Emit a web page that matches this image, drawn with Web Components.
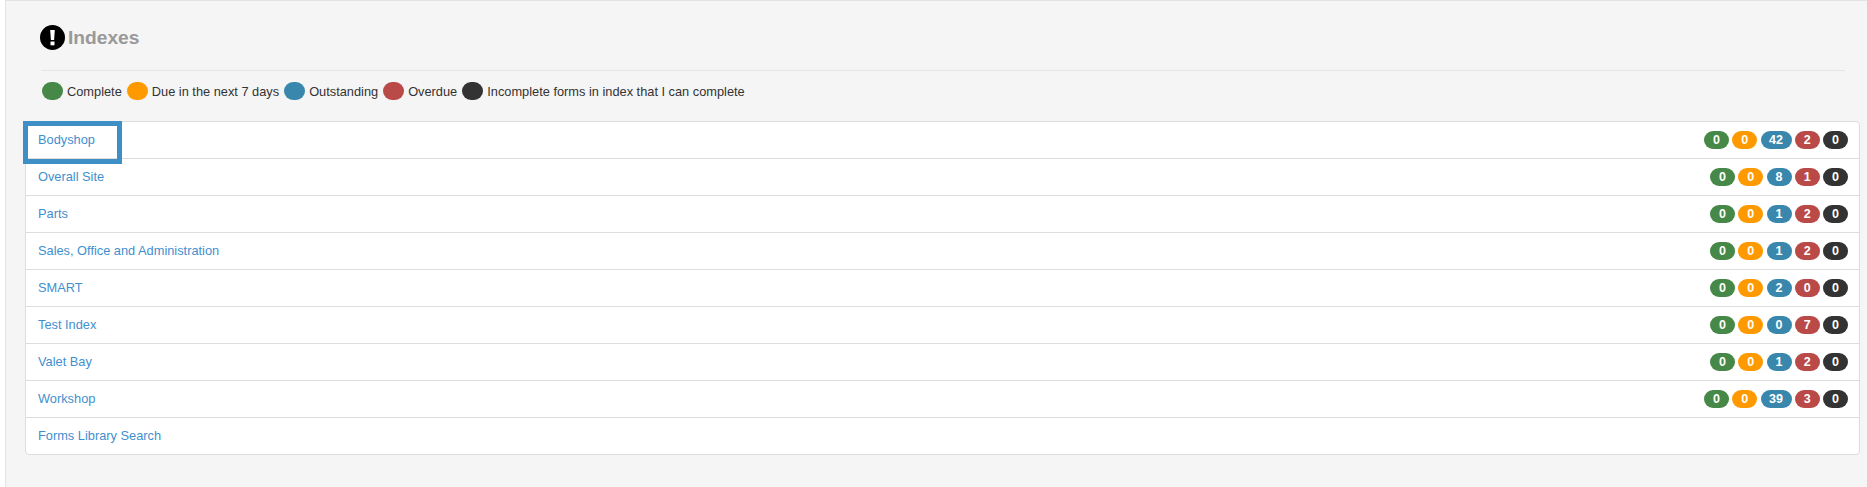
<!DOCTYPE html>
<html>
<head>
<meta charset="utf-8">
<title>Indexes</title>
<style>
  html, body { margin: 0; padding: 0; background: #fff; height: 100%; overflow: hidden; }
  body { font-family: "Liberation Sans", Arial, sans-serif; font-size: 12.8px; color: #333; }
</style>
</head>
<body>
<index-panel>
  <index-row name="Bodyshop" counts="0,0,42,2,0" focused></index-row>
  <index-row name="Overall Site" counts="0,0,8,1,0"></index-row>
  <index-row name="Parts" counts="0,0,1,2,0"></index-row>
  <index-row name="Sales, Office and Administration" counts="0,0,1,2,0"></index-row>
  <index-row name="SMART" counts="0,0,2,0,0"></index-row>
  <index-row name="Test Index" counts="0,0,0,7,0"></index-row>
  <index-row name="Valet Bay" counts="0,0,1,2,0"></index-row>
  <index-row name="Workshop" counts="0,0,39,3,0"></index-row>
  <index-row name="Forms Library Search"></index-row>
</index-panel>

<script>
(function Indexes() {
  const COLOURS = ["#468847", "#ff9900", "#3a87ad", "#b94a48", "#333333"];

  class CountBadge extends HTMLElement {
    constructor() {
      super();
      this.attachShadow({ mode: "open" });
      this.shadowRoot.innerHTML = `
        <style>
          :host {
            display: inline-block;
            box-sizing: border-box;
            height: 18px;
            min-width: 25px;
            padding: 0 8.5px;
            border-radius: 9px;
            background: var(--badge, #333);
            color: #fff;
            font-size: 12.5px;
            font-weight: bold;
            line-height: 18px;
            text-align: center;
          }
        </style>
        <slot></slot>
      `;
    }
  }

  class LegendItem extends HTMLElement {
    constructor() {
      super();
      this.attachShadow({ mode: "open" });
      this.shadowRoot.innerHTML = `
        <style>
          :host { display: inline-flex; align-items: center; gap: 4px; }
          i {
            display: block;
            width: 21px;
            height: 18px;
            border-radius: 9px;
            background: var(--badge, #333);
          }
        </style>
        <i></i><slot></slot>
      `;
    }
  }

  class IndexRow extends HTMLElement {
    constructor() {
      super();
      const name = this.getAttribute("name");
      const counts = this.getAttribute("counts");
      const badges = counts
        ? counts
            .split(",")
            .map((n, i) => `<count-badge style="--badge:${COLOURS[i]}">${n}</count-badge>`)
            .join("")
        : "";
      this.attachShadow({ mode: "open" });
      this.shadowRoot.innerHTML = `
        <style>
          :host {
            display: flex;
            position: relative;
            box-sizing: border-box;
            height: 37px;
            padding: 0 11px 1px 12px;
            align-items: center;
            justify-content: space-between;
            border-bottom: 1px solid #ddd;
          }
          :host([focused]) { z-index: 1; }
          :host(:last-child) { border-bottom: 0; height: 36px; }
          a { color: #3f8fcf; text-decoration: none; font-size: 12.8px; }
          .badges { display: flex; gap: 3.25px; }
          .focus {
            position: absolute;
            left: -3px;
            top: -1px;
            width: 99px;
            height: 43px;
            box-sizing: border-box;
            border: 5px solid #3d8fc6;
          }
        </style>
        <a href="#">${name}</a>
        <div class="badges">${badges}</div>
        ${this.hasAttribute("focused") ? '<div class="focus"></div>' : ""}
      `;
    }
  }

  class IndexPanel extends HTMLElement {
    constructor() {
      super();
      this.attachShadow({ mode: "open" });
      this.shadowRoot.innerHTML = `
        <style>
          :host {
            display: block;
            box-sizing: border-box;
            height: 487px;
            margin-left: 5px;
            padding: 24px 7px 0 19px;
            background: #f5f5f5;
            border: 1px solid #e3e3e3;
            border-width: 1px 0 0 1px;
          }
          header {
            display: flex;
            align-items: center;
            height: 25px;
            margin-left: 15px;
            color: #999;
            font-size: 19.2px;
            font-weight: bold;
          }
          header svg { display: block; width: 25px; height: 25px; margin-right: 3px; }
          header span { padding-top: 1px; }
          hr {
            border: 0;
            border-top: 1px solid #e5e5e5;
            margin: 20px 15px 0 16px;
          }
          .legend {
            display: flex;
            gap: 5px;
            margin: 11px 0 0 17px;
            height: 18px;
            align-items: center;
          }
          .list {
            margin-top: 21px;
            border: 1px solid #ddd;
            border-radius: 4px;
            background: #fff;
          }
        </style>
        <header>
          <svg viewBox="0 0 25 25" aria-hidden="true">
            <circle cx="12.5" cy="12.5" r="12.5" fill="#000"/>
            <path d="M10.2 5h4.6l-.7 10h-3.2z" fill="#fff"/>
            <rect x="10.5" y="16.5" width="4" height="3.8" fill="#fff"/>
          </svg>
          <span>Indexes</span>
        </header>
        <hr>
        <div class="legend">
          <legend-item style="--badge:${COLOURS[0]}">Complete</legend-item>
          <legend-item style="--badge:${COLOURS[1]}">Due in the next 7 days</legend-item>
          <legend-item style="--badge:${COLOURS[2]}">Outstanding</legend-item>
          <legend-item style="--badge:${COLOURS[3]}">Overdue</legend-item>
          <legend-item style="--badge:${COLOURS[4]}">Incomplete forms in index that I can complete</legend-item>
        </div>
        <div class="list"><slot></slot></div>
      `;
    }
  }

  window.customElements.define("count-badge", CountBadge);
  window.customElements.define("legend-item", LegendItem);
  window.customElements.define("index-row", IndexRow);
  window.customElements.define("index-panel", IndexPanel);
})();
</script>
</body>
</html>
